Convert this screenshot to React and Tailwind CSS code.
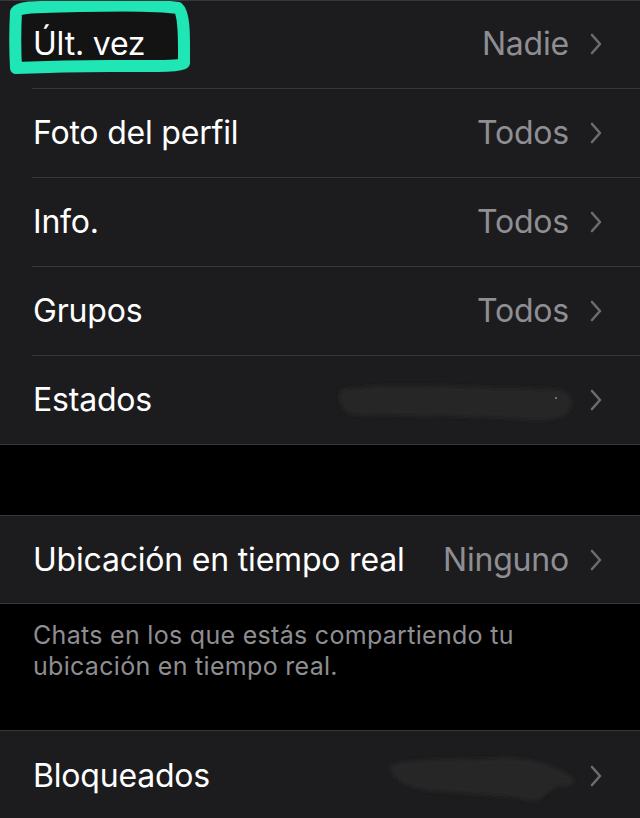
import React from 'react';

const font = { fontFamily: 'Inter, "Noto Sans", "Liberation Sans", sans-serif' };

const Chevron = () => (
    <svg width="16" height="26" viewBox="0 0 16 26" className="flex-none">
        <path d="M4 4 L12 13 L4 22" fill="none" stroke="#6b6b70" strokeWidth="2.6" strokeLinecap="round" strokeLinejoin="round" />
    </svg>
);

const Smudge = ({ className, d }) => (
    <svg className={`absolute pointer-events-none ${className}`} viewBox="0 0 260 60" preserveAspectRatio="none">
        <defs>
            <filter id="blur" x="-10%" y="-30%" width="120%" height="160%">
                <feGaussianBlur stdDeviation="2.5" />
            </filter>
        </defs>
        <path d={d} fill="#252527" filter="url(#blur)" />
    </svg>
);

const Row = ({ label, value, last, h = 'h-[89px]', children }) => (
    <div className="relative pl-8 bg-[#1c1c1e]">
        <div className={`${h} flex items-center pr-9 ${last ? '' : 'border-b border-[#38383a]'}`}>
            <span className="relative z-10 pl-px text-[32px] text-white tracking-[-0.2px] flex-1 whitespace-nowrap">{label}</span>
            {value && <span className="text-[32px] text-[#8e8e93] tracking-[-0.2px] mr-[19px] whitespace-nowrap">{value}</span>}
            <Chevron />
        </div>
        {children}
    </div>
);

export default function App() {
    return (
        <div className="w-[640px] h-[818px] bg-black overflow-hidden relative" style={font}>
            {/* First group */}
            <div className="relative border-b border-[#38383a]">
                <div className="absolute left-0 right-0 top-0 h-px bg-[#38383a] z-10" />
                <Row label="Últ. vez" value="Nadie" />
                <Row label="Foto del perfil" value="Todos" />
                <Row label="Info." value="Todos" />
                <Row label="Grupos" value="Todos" />
                <Row label="Estados" last h="h-[88px]">
                    <Smudge
                        className="left-[333px] top-[22px] w-[248px] h-[52px]"
                        d="M8 14 C30 8 80 8 140 10 C180 12 220 12 240 14 C252 18 252 34 244 42 C230 50 210 50 180 46 C150 44 80 44 20 42 C8 38 4 22 8 14 Z"
                    />
                    <div className="absolute left-[555px] top-[41px] w-[2px] h-[2px] bg-[#8a8a8f] rounded-full" />
                </Row>
            </div>

            <div className="h-[70px]" />

            {/* Live location */}
            <div className="border-t border-b border-[#38383a]">
                <Row label="Ubicación en tiempo real" value="Ninguno" last h="h-[87px]" />
            </div>
            <p className="pl-[33px] pr-8 pt-[16px] text-[25px] leading-[31px] text-[#8e8e93] tracking-[0.3px]">
                Chats en los que estás compartiendo tu<br />ubicación en tiempo real.
            </p>

            <div className="h-[48px]" />

            <div className="border-t border-[#38383a]">
                <Row label="Bloqueados" last>
                    <Smudge
                        className="left-[386px] top-[20px] w-[196px] h-[52px]"
                        d="M6 16 C30 8 100 10 160 8 C190 8 215 14 240 26 C256 34 250 42 230 40 C215 44 210 56 196 58 C170 52 120 50 60 46 C30 44 2 30 6 16 Z"
                    />
                </Row>
            </div>

            {/* Highlight marker */}
            <svg className="absolute left-0 top-0 pointer-events-none z-[5]" width="200" height="82" viewBox="0 0 200 82">
                <path
                    d="M22 13 C60 12 130 11 178 13 L178 60 C130 61 60 61 22 61 Z"
                    fill="rgba(0,0,0,0.3)"
                />
                <path
                    d="M16 68 C15 50 15 30 16 12 C20 6 40 7 80 6 C120 5 160 5 178 8 C185 14 184 40 184 63 C180 67 150 66 110 66 C70 66 40 67 16 68"
                    fill="none"
                    stroke="#1fe6b4"
                    strokeWidth="12"
                    strokeLinecap="round"
                    strokeLinejoin="round"
                />
            </svg>
        </div>
    );
}
